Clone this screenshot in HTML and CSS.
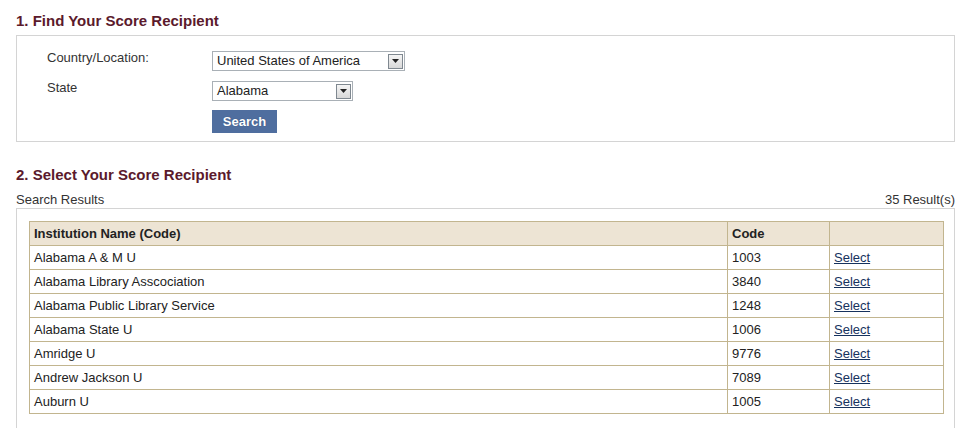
FILE: index.html
```html
<!DOCTYPE html>
<html>
<head>
<meta charset="utf-8">
<link rel="stylesheet" href="styles.css">
</head>
<body>
<div class="page">
  <h2 class="step">1. Find Your Score Recipient</h2>
  <div class="panel search-panel">
    <div class="form-row">
      <div class="label">Country/Location:</div>
      <div class="select wide"><span class="value">United States of America</span><span class="arrow"><svg width="7" height="4" viewBox="0 0 7 4"><path d="M0 0h7L3.5 4z" fill="#222"/></svg></span></div>
    </div>
    <div class="form-row">
      <div class="label">State</div>
      <div class="select narrow"><span class="value">Alabama</span><span class="arrow"><svg width="7" height="4" viewBox="0 0 7 4"><path d="M0 0h7L3.5 4z" fill="#222"/></svg></span></div>
    </div>
    <div class="form-row">
      <div class="label"></div>
      <button class="btn">Search</button>
    </div>
  </div>

  <h2 class="step second">2. Select Your Score Recipient</h2>
  <div class="results-bar">
    <span>Search Results</span>
    <span>35 Result(s)</span>
  </div>
  <div class="panel results-panel">
    <table class="results">
      <thead>
        <tr><th class="c-name">Institution Name (Code)</th><th class="c-code">Code</th><th class="c-sel"></th></tr>
      </thead>
      <tbody>
        <tr><td>Alabama A &amp; M U</td><td>1003</td><td><a href="#">Select</a></td></tr>
        <tr><td>Alabama Library Asscociation</td><td>3840</td><td><a href="#">Select</a></td></tr>
        <tr><td>Alabama Public Library Service</td><td>1248</td><td><a href="#">Select</a></td></tr>
        <tr><td>Alabama State U</td><td>1006</td><td><a href="#">Select</a></td></tr>
        <tr><td>Amridge U</td><td>9776</td><td><a href="#">Select</a></td></tr>
        <tr><td>Andrew Jackson U</td><td>7089</td><td><a href="#">Select</a></td></tr>
        <tr><td>Auburn U</td><td>1005</td><td><a href="#">Select</a></td></tr>
      </tbody>
    </table>
  </div>
</div>
</body>
</html>
```

FILE: styles.css
```css
html, body {
  margin: 0;
  padding: 0;
  background: #fff;
}
body {
  font-family: "Liberation Sans", Arial, sans-serif;
  font-size: 13px;
  color: #333;
}
.page {
  padding: 12px 13px 0 16px;
}
.step {
  margin: 0;
  font-size: 15px;
  line-height: 17px;
  font-weight: bold;
  color: #5b1a2c;
}
.step.second {
  margin-top: 24px;
}
.panel {
  border: 1px solid #d4d4d4;
  background: #fff;
}
.search-panel {
  margin-top: 6px;
  padding: 15px 0 7px 30px;
  height: 83px;
}
.form-row {
  display: flex;
  align-items: flex-start;
  height: 30px;
}
.label {
  width: 165px;
  line-height: 15px;
  margin-top: -1px;
}
.select {
  box-sizing: border-box;
  height: 20px;
  border: 1px solid #a9b0b6;
  display: flex;
  align-items: center;
  justify-content: space-between;
  padding: 0 1px 0 4px;
  background: #fff;
}
.select.wide { width: 193px; }
.select.narrow { width: 141px; }
.select .value {
  color: #222;
  line-height: 16px;
}
.arrow {
  box-sizing: border-box;
  width: 15px;
  height: 15px;
  border: 1px solid #7f8890;
  background: linear-gradient(#f5f5f5, #d8d8d8);
  display: flex;
  align-items: center;
  justify-content: center;
}
.btn {
  font-family: "Liberation Sans", Arial, sans-serif;
  font-size: 13px;
  font-weight: bold;
  color: #fff;
  background: #4f6e9f;
  border: none;
  width: 65px;
  height: 23px;
  padding: 0;
  margin-top: -1px;
  text-shadow: 0 0 1px #2e4a75;
}
.results-bar {
  display: flex;
  justify-content: space-between;
  margin-top: 9px;
  line-height: 16px;
}
.results-panel {
  margin-top: 0;
  padding: 12px 10px 20px 12px;
}
.results {
  width: 100%;
  border-collapse: collapse;
}
.results th, .results td {
  border: 1px solid #c2b58f;
  height: 23px;
  padding: 0 4px 0 4px;
  text-align: left;
  vertical-align: middle;
  color: #222;
  font-size: 13px;
}
.results th {
  background: #ede4d4;
  font-weight: bold;
}
.c-code { width: 93px; }
.c-sel { width: 105px; }
.results a {
  color: #16325e;
  text-decoration: underline;
}
```
